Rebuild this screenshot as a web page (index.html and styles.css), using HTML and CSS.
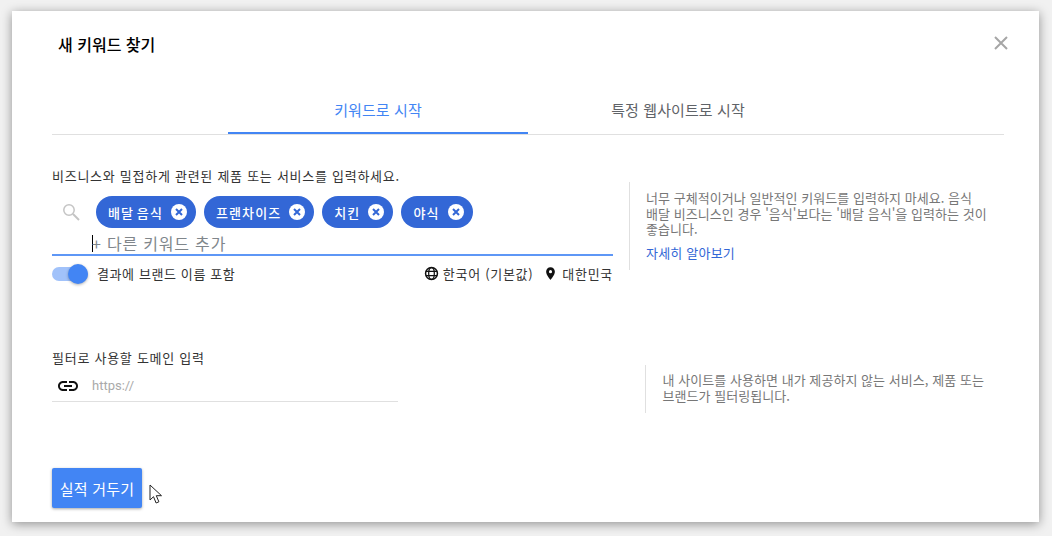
FILE: index.html
```html
<!DOCTYPE html>
<html lang="ko">
<head>
    <meta charset="UTF-8">
    <meta name="viewport" content="width=device-width, initial-scale=1.0">
    <title>새 키워드 찾기</title>
    <link rel="stylesheet" href="styles.css">
</head>
<body>
    <div class="dialog">
        <header class="dialog-head">
            <h1>새 키워드 찾기</h1>
            <svg class="close" viewBox="0 0 14 14" width="14" height="14"><path d="M1 1l12 12M13 1L1 13" stroke="#a6a6a6" stroke-width="2" fill="none"/></svg>
        </header>

        <div class="tabs">
            <div class="tab active">키워드로 시작</div>
            <div class="tab">특정 웹사이트로 시작</div>
        </div>

        <section class="keyword-row">
            <div class="keyword-main">
                <p class="label">비즈니스와 밀접하게 관련된 제품 또는 서비스를 입력하세요.</p>
                <div class="chips-row">
                    <svg class="search" viewBox="0 0 18 18" width="18" height="18"><circle cx="7" cy="7" r="5.2" stroke="#c4c4c4" stroke-width="1.5" fill="none"/><path d="M11 11l6 6" stroke="#c4c4c4" stroke-width="2" fill="none"/></svg>
                    <span class="chip">배달 음식<svg viewBox="0 0 16 16" width="16" height="16"><circle cx="8" cy="8" r="8" fill="#fff"/><path d="M5 5l6 6M11 5l-6 6" stroke="#3367d6" stroke-width="2"/></svg></span>
                    <span class="chip">프랜차이즈<svg viewBox="0 0 16 16" width="16" height="16"><circle cx="8" cy="8" r="8" fill="#fff"/><path d="M5 5l6 6M11 5l-6 6" stroke="#3367d6" stroke-width="2"/></svg></span>
                    <span class="chip">치킨<svg viewBox="0 0 16 16" width="16" height="16"><circle cx="8" cy="8" r="8" fill="#fff"/><path d="M5 5l6 6M11 5l-6 6" stroke="#3367d6" stroke-width="2"/></svg></span>
                    <span class="chip">야식<svg viewBox="0 0 16 16" width="16" height="16"><circle cx="8" cy="8" r="8" fill="#fff"/><path d="M5 5l6 6M11 5l-6 6" stroke="#3367d6" stroke-width="2"/></svg></span>
                </div>
                <div class="add-input"><span class="caret"></span>+ 다른 키워드 추가</div>
                <div class="options">
                    <span class="toggle"><span class="knob"></span></span>
                    <span class="toggle-label">결과에 브랜드 이름 포함</span>
                    <span class="locale">
                        <svg viewBox="0 0 24 24" width="15" height="15"><circle cx="12" cy="12" r="9.5" fill="none" stroke="#111" stroke-width="2.4"/><ellipse cx="12" cy="12" rx="4.5" ry="9.5" fill="none" stroke="#111" stroke-width="2"/><path d="M3 8.500h18M3 15.500h18" stroke="#111" stroke-width="2"/></svg>
                        한국어 (기본값)
                    </span>
                    <span class="locale">
                        <svg viewBox="0 0 24 24" width="15" height="15"><path d="M12 2C8 2 5 5.100 5 9c0 5.200 7 13 7 13s7-7.800 7-13c0-3.900-3-7-7-7zm0 9.500A2.500 2.500 0 1 1 12 6.500a2.500 2.500 0 0 1 0 5z" fill="#111"/></svg>
                        대한민국
                    </span>
                </div>
            </div>
            <aside class="hint">
                <p>너무 구체적이거나 일반적인 키워드를 입력하지 마세요. 음식 배달 비즈니스인 경우 '음식'보다는 '배달 음식'을 입력하는 것이 좋습니다.</p>
                <a href="#">자세히 알아보기</a>
            </aside>
        </section>

        <section class="domain-row">
            <div class="domain-main">
                <p class="label">필터로 사용할 도메인 입력</p>
                <div class="domain-input">
                    <svg viewBox="0 0 24 24" width="24" height="24"><path d="M3.900 12c0-1.710 1.390-3.100 3.100-3.100h4V7H7c-2.760 0-5 2.240-5 5s2.240 5 5 5h4v-1.900H7c-1.710 0-3.100-1.390-3.100-3.100zM8 13h8v-2H8v2zm9-6h-4v1.900h4c1.710 0 3.100 1.390 3.100 3.100s-1.390 3.100-3.100 3.100h-4V17h4c2.760 0 5-2.240 5-5s-2.240-5-5-5z" fill="#111"/></svg>
                    <span class="placeholder">https://</span>
                </div>
            </div>
            <aside class="hint domain-hint">
                <p>내 사이트를 사용하면 내가 제공하지 않는 서비스, 제품 또는 브랜드가 필터링됩니다.</p>
            </aside>
        </section>

        <footer class="dialog-foot">
            <button>실적 거두기</button>
            <svg class="pointer" viewBox="0 0 14 21" width="14" height="21"><path d="M1 1v15l3.500-3.300 2.600 6.300 2.800-1.200-2.600-6.100H12.500z" fill="#fff" stroke="#222" stroke-width="1"/></svg>
        </footer>
    </div>
</body>
</html>
```

FILE: styles.css
```css
* {
    box-sizing: border-box;
}
body {
    margin: 0;
    height: 536px;
    overflow: hidden;
    padding: 11px 13px 14px 12px;
    background-color: #f1f1f1;
    font-family: "Noto Sans CJK KR", "Noto Sans", sans-serif;
    color: #333;
}
p {
    margin: 0;
}
.dialog {
    height: 511px;
    padding: 0 35px 0 40px;
    background-color: #fff;
    box-shadow: 0 2px 10px rgba(0, 0, 0, 0.4);
}
.dialog-head {
    display: flex;
    justify-content: space-between;
    padding-top: 23px;
    height: 76px;
}
.dialog-head h1 {
    margin: 0 0 0 6px;
    font-size: 16px;
    line-height: 20px;
    font-weight: 500;
    color: #000;
}
.close {
    margin: 2px -4px 0 0;
}
.tabs {
    display: flex;
    justify-content: center;
    height: 48px;
    width: 952px;
    border-bottom: 1px solid #e0e0e0;
}
.tab {
    width: 300px;
    height: 47px;
    padding-top: 14px;
    font-size: 15px;
    line-height: 18px;
    letter-spacing: 0.1px;
    text-align: center;
    color: #5f6368;
}
.tab.active {
    color: #4285f4;
    border-bottom: 2px solid #4285f4;
}
.keyword-row {
    display: flex;
    width: 952px;
    margin-top: 33px;
    height: 150px;
}
.keyword-main {
    width: 561px;
}
.label {
    font-size: 13px;
    line-height: 16px;
    letter-spacing: 0.73px;
    color: #333;
}
.chips-row {
    display: flex;
    align-items: center;
    gap: 8px;
    margin-top: 12px;
    height: 32px;
}
.search {
    margin: 0 8px 0 10px;
}
.chip {
    display: flex;
    align-items: center;
    gap: 8px;
    height: 32px;
    padding: 0 9px 0 12px;
    border-radius: 16px;
    background-color: #3367d6;
    color: #fff;
    font-size: 13px;
    letter-spacing: 1.1px;
    word-spacing: -2px;
    font-weight: 500;
}
.add-input {
    display: flex;
    align-items: center;
    height: 28px;
    padding: 4px 0 0 40px;
    font-size: 16px;
    letter-spacing: 0.8px;
    color: #80868b;
    border-bottom: 2px solid #5e97f6;
}
.caret {
    width: 1px;
    height: 17px;
    margin-right: -1px;
    background-color: #000;
}
.options {
    display: flex;
    align-items: center;
    margin-top: 7px;
    height: 22px;
    font-size: 13px;
    letter-spacing: 0.7px;
    color: #333;
}
.toggle {
    position: relative;
    width: 36px;
    height: 14px;
    border-radius: 7px;
    background-color: #a1c2fa;
}
.knob {
    position: absolute;
    top: -3px;
    right: 0;
    width: 20px;
    height: 20px;
    border-radius: 50%;
    background-color: #4285f4;
    box-shadow: 0 1px 3px rgba(0, 0, 0, 0.3);
}
.toggle-label {
    margin: 0 auto 2px 9px;
    letter-spacing: 0.6px;
}
.locale {
    display: flex;
    align-items: center;
    gap: 4px;
    margin: 0 0 2px 10px;
}
.hint {
    margin: 14px 0 0 16px;
    padding: 8px 0 0 16px;
    width: 360px;
    height: 88px;
    border-left: 1px solid #e0e0e0;
    font-size: 13px;
    line-height: 15.5px;
    letter-spacing: 0.05px;
    word-break: keep-all;
    color: #777;
}
.hint a {
    display: block;
    margin-top: 8px;
    letter-spacing: 0.2px;
    color: #3367d6;
    text-decoration: none;
}
.domain-row {
    display: flex;
    width: 952px;
    margin-top: 32px;
}
.domain-main {
    width: 346px;
}
.domain-input {
    display: flex;
    align-items: center;
    height: 32px;
    padding-left: 4px;
    margin-top: 4px;
    border-bottom: 1px solid #e0e0e0;
}
.placeholder {
    margin-left: 12px;
    font-family: Roboto, sans-serif;
    font-size: 13px;
    color: #aaa;
}
.domain-hint {
    margin: 15px 0 0 247px;
    height: 48px;
    padding: 7px 0 0 17px;
}
.dialog-foot {
    display: flex;
    align-items: flex-start;
    margin-top: 55px;
}
button {
    width: 90px;
    height: 40px;
    border: none;
    border-radius: 2px;
    background-color: #4285f4;
    color: #fff;
    font-family: inherit;
    font-size: 15px;
    letter-spacing: 0.2px;
    box-shadow: 0 1px 3px rgba(0, 0, 0, 0.35);
}
.pointer {
    margin: 16px 0 0 7px;
}
```
